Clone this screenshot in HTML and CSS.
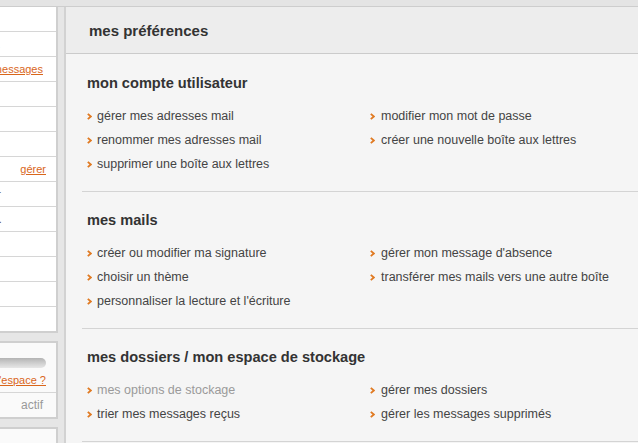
FILE: index.html
```html
<!DOCTYPE html>
<html lang="fr">
<head>
<meta charset="utf-8">
<title>mes préférences</title>
<link rel="stylesheet" href="styles.css">
</head>
<body>
<div class="topbar"></div>
<div class="layout">
  <aside class="sidebar">
    <div class="sbox">
      <div class="sinner">
        <div class="srow"><span class="slabel">boîte de réception</span></div>
        <div class="srow"><span class="slabel">nouveaux messages reçus aujourd'hui</span></div>
        <div class="srow srow-msg"><span class="slabel"></span><a class="slink" href="#">tous mes messages</a></div>
        <div class="srow"><span class="slabel">brouillons</span></div>
        <div class="srow"><span class="slabel">envoyés</span></div>
        <div class="srow"><span class="slabel">corbeille</span></div>
        <div class="srow"><span class="slabel">mes dossiers</span><a class="slink" href="#">gérer</a></div>
        <div class="srow"><span class="slabel">messages importants à traiter</span></div>
        <div class="srow"><span class="slabel">factures et documents administratifs</span></div>
        <div class="srow"><span class="slabel">archives</span></div>
        <div class="srow"><span class="slabel">spam</span></div>
        <div class="srow"><span class="slabel">contacts</span></div>
        <div class="srow"><span class="slabel">agenda</span></div>
      </div>
    </div>
    <div class="sbox sbox2">
      <div class="sinner">
        <div class="quota"><div class="bar"></div></div>
        <div class="qrow"><a class="slink" href="#">comment libérer de l'espace ?</a></div>
        <div class="qrow qstatus"><span class="qlabel">filtre anti-spam</span><span class="muted">actif</span></div>
      </div>
    </div>
    <div class="sbox sbox3"></div>
  </aside>
  <main class="main">
    <header class="mhead">mes préférences</header>
    <section class="sect">
      <h2 class="stitle">mon compte utilisateur</h2>
      <ul class="items">
        <li class="item"><svg class="chev" width="5" height="7" viewBox="0 0 5 7"><polyline points="0.8,0.8 3.8,3.5 0.8,6.2" fill="none" stroke="#e07a22" stroke-width="1.8"/></svg>gérer mes adresses mail</li>
        <li class="item"><svg class="chev" width="5" height="7" viewBox="0 0 5 7"><polyline points="0.8,0.8 3.8,3.5 0.8,6.2" fill="none" stroke="#e07a22" stroke-width="1.8"/></svg>modifier mon mot de passe</li>
        <li class="item"><svg class="chev" width="5" height="7" viewBox="0 0 5 7"><polyline points="0.8,0.8 3.8,3.5 0.8,6.2" fill="none" stroke="#e07a22" stroke-width="1.8"/></svg>renommer mes adresses mail</li>
        <li class="item"><svg class="chev" width="5" height="7" viewBox="0 0 5 7"><polyline points="0.8,0.8 3.8,3.5 0.8,6.2" fill="none" stroke="#e07a22" stroke-width="1.8"/></svg>créer une nouvelle boîte aux lettres</li>
        <li class="item"><svg class="chev" width="5" height="7" viewBox="0 0 5 7"><polyline points="0.8,0.8 3.8,3.5 0.8,6.2" fill="none" stroke="#e07a22" stroke-width="1.8"/></svg>supprimer une boîte aux lettres</li>
      </ul>
    </section>
    <section class="sect">
      <h2 class="stitle">mes mails</h2>
      <ul class="items">
        <li class="item"><svg class="chev" width="5" height="7" viewBox="0 0 5 7"><polyline points="0.8,0.8 3.8,3.5 0.8,6.2" fill="none" stroke="#e07a22" stroke-width="1.8"/></svg>créer ou modifier ma signature</li>
        <li class="item"><svg class="chev" width="5" height="7" viewBox="0 0 5 7"><polyline points="0.8,0.8 3.8,3.5 0.8,6.2" fill="none" stroke="#e07a22" stroke-width="1.8"/></svg>gérer mon message d'absence</li>
        <li class="item"><svg class="chev" width="5" height="7" viewBox="0 0 5 7"><polyline points="0.8,0.8 3.8,3.5 0.8,6.2" fill="none" stroke="#e07a22" stroke-width="1.8"/></svg>choisir un thème</li>
        <li class="item"><svg class="chev" width="5" height="7" viewBox="0 0 5 7"><polyline points="0.8,0.8 3.8,3.5 0.8,6.2" fill="none" stroke="#e07a22" stroke-width="1.8"/></svg>transférer mes mails vers une autre boîte</li>
        <li class="item"><svg class="chev" width="5" height="7" viewBox="0 0 5 7"><polyline points="0.8,0.8 3.8,3.5 0.8,6.2" fill="none" stroke="#e07a22" stroke-width="1.8"/></svg>personnaliser la lecture et l'écriture</li>
      </ul>
    </section>
    <section class="sect">
      <h2 class="stitle">mes dossiers / mon espace de stockage</h2>
      <ul class="items">
        <li class="item disabled"><svg class="chev" width="5" height="7" viewBox="0 0 5 7"><polyline points="0.8,0.8 3.8,3.5 0.8,6.2" fill="none" stroke="#e07a22" stroke-width="1.8"/></svg>mes options de stockage</li>
        <li class="item"><svg class="chev" width="5" height="7" viewBox="0 0 5 7"><polyline points="0.8,0.8 3.8,3.5 0.8,6.2" fill="none" stroke="#e07a22" stroke-width="1.8"/></svg>gérer mes dossiers</li>
        <li class="item"><svg class="chev" width="5" height="7" viewBox="0 0 5 7"><polyline points="0.8,0.8 3.8,3.5 0.8,6.2" fill="none" stroke="#e07a22" stroke-width="1.8"/></svg>trier mes messages reçus</li>
        <li class="item"><svg class="chev" width="5" height="7" viewBox="0 0 5 7"><polyline points="0.8,0.8 3.8,3.5 0.8,6.2" fill="none" stroke="#e07a22" stroke-width="1.8"/></svg>gérer les messages supprimés</li>
      </ul>
    </section>
  </main>
</div>
</body>
</html>
```

FILE: styles.css
```css
html, body {
  margin: 0;
  padding: 0;
}
body {
  width: 638px;
  height: 443px;
  overflow: hidden;
  background: #e6e6e6;
  font-family: "Liberation Sans", Arial, sans-serif;
  color: #444;
}
.topbar {
  height: 6px;
  background: #e4e4e4;
  border-bottom: 1px solid #cdcdcd;
}
.layout {
  display: flex;
  gap: 6px;
  align-items: flex-start;
  height: 436px;
  overflow: hidden;
}
.sidebar {
  width: 58px;
  flex: none;
  display: flex;
  flex-direction: column;
  gap: 8px;
}
.sbox {
  background: #fff;
  border-right: 2px solid #cfcfcf;
  border-bottom: 2px solid #cfcfcf;
  overflow: hidden;
}
.sinner {
  width: 200px;
  margin-left: -144px;
}
.srow {
  height: 24px;
  border-bottom: 1px solid #d6d6d6;
  display: flex;
  align-items: center;
  justify-content: space-between;
  font-size: 11px;
  padding-right: 10px;
  width: 190px;
}
.srow:last-child {
  border-bottom: none;
}
.srow-msg {
  padding-right: 13px;
  width: 187px;
}
.slabel {
  width: 151px;
  white-space: nowrap;
  overflow: hidden;
  text-overflow: ellipsis;
  color: #555;
  flex: none;
}
.srow .slabel + .slink {
  margin-left: -151px;
}
.slink {
  color: #d9661b;
  text-decoration: underline;
  font-size: 11px;
  white-space: nowrap;
}
.sbox2 {
  border-top: 2px solid #cfcfcf;
  background: #fafafa;
}
.quota {
  padding: 15px 10px 0 20px;
}
.bar {
  height: 10px;
  border-radius: 0 5px 5px 0;
  background: linear-gradient(#b4b4b4, #d8d8d8 70%, #e6e6e6);
}
.qrow {
  height: 24px;
  display: flex;
  align-items: center;
  justify-content: flex-end;
  padding-right: 10px;
}
.qstatus {
  border-top: 1px solid #d6d6d6;
  justify-content: space-between;
  padding-right: 13px;
}
.qlabel {
  color: #999;
  font-size: 12px;
  white-space: nowrap;
}
.muted {
  color: #999;
  font-size: 12px;
  white-space: nowrap;
}
.sbox3 {
  border-top: 2px solid #cfcfcf;
  border-bottom: none;
  height: 15px;
  background: #fafafa;
}
.main {
  flex: 1;
  min-width: 0;
  border-left: 2px solid #d2d2d2;
  background: #f5f5f5;
  height: 436px;
  overflow: hidden;
}
.mhead {
  height: 46px;
  background: #ededed;
  border-bottom: 1px solid #cbcbcb;
  display: flex;
  align-items: center;
  padding-left: 23px;
  font-weight: bold;
  font-size: 15px;
  color: #333;
}
.sect {
  margin-left: 16px;
  padding: 18px 0 15px 5px;
  border-bottom: 1px solid #d4d4d4;
}
.sect:first-of-type {
  padding-top: 19px;
}
.stitle {
  margin: 0 0 11px;
  font-size: 14.6px;
  line-height: 20px;
  font-weight: bold;
  color: #333;
}
.items {
  list-style: none;
  margin: 0;
  padding: 0;
  display: grid;
  grid-template-columns: 283px 1fr;
}
.item {
  font-size: 12.5px;
  line-height: 24px;
  color: #444;
  display: flex;
  align-items: center;
  white-space: nowrap;
}
.chev {
  flex: none;
  margin-right: 5px;
  margin-top: 1px;
}
.item:nth-child(even) .chev {
  margin-right: 6px;
}
.disabled {
  color: #9a9a9a;
}
```
